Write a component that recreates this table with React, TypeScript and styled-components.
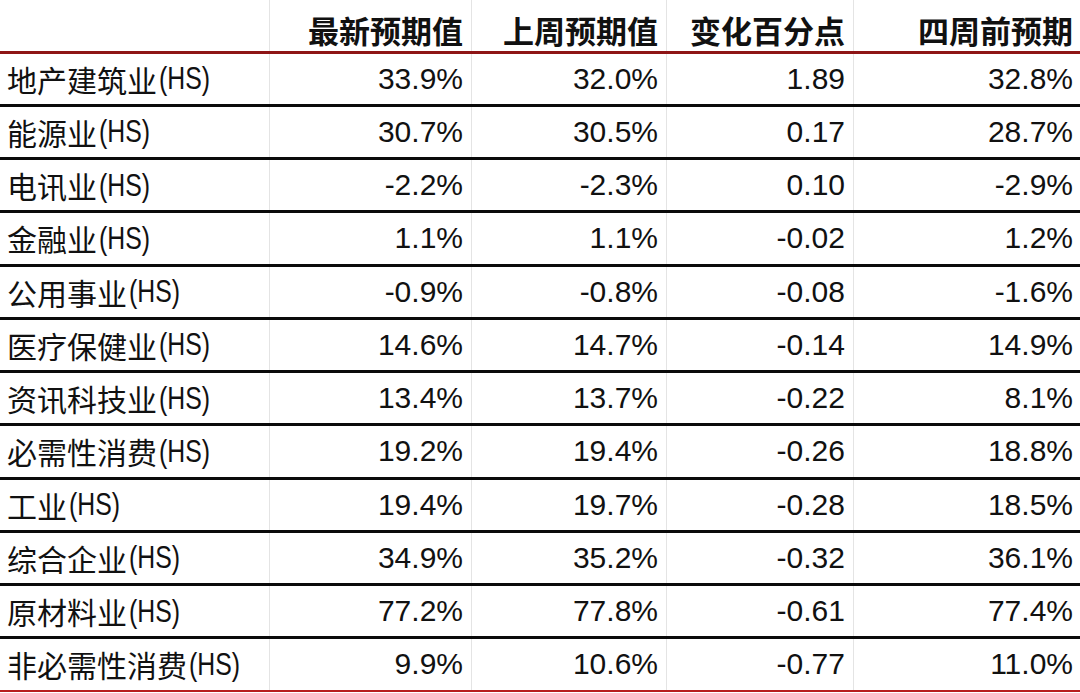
import styled, { createGlobalStyle } from 'styled-components'

const GlobalStyle = createGlobalStyle`
    html, body {
        margin: 0;
        padding: 0;
        background: #ffffff;
    }
    body {
        font-family: "Liberation Sans", Arial, "Noto Sans CJK SC", sans-serif;
        color: #111111;
    }
`;

const rows = [
    { name: '地产建筑业', latest: '33.9%', last: '32.0%', change: '1.89', prev: '32.8%' },
    { name: '能源业', latest: '30.7%', last: '30.5%', change: '0.17', prev: '28.7%' },
    { name: '电讯业', latest: '-2.2%', last: '-2.3%', change: '0.10', prev: '-2.9%' },
    { name: '金融业', latest: '1.1%', last: '1.1%', change: '-0.02', prev: '1.2%' },
    { name: '公用事业', latest: '-0.9%', last: '-0.8%', change: '-0.08', prev: '-1.6%' },
    { name: '医疗保健业', latest: '14.6%', last: '14.7%', change: '-0.14', prev: '14.9%' },
    { name: '资讯科技业', latest: '13.4%', last: '13.7%', change: '-0.22', prev: '8.1%' },
    { name: '必需性消费', latest: '19.2%', last: '19.4%', change: '-0.26', prev: '18.8%' },
    { name: '工业', latest: '19.4%', last: '19.7%', change: '-0.28', prev: '18.5%' },
    { name: '综合企业', latest: '34.9%', last: '35.2%', change: '-0.32', prev: '36.1%' },
    { name: '原材料业', latest: '77.2%', last: '77.8%', change: '-0.61', prev: '77.4%' },
    { name: '非必需性消费', latest: '9.9%', last: '10.6%', change: '-0.77', prev: '11.0%' },
];

const headers = ['最新预期值', '上周预期值', '变化百分点', '四周前预期'];

const Table = styled.div`
    width: 1080px;
    display: flex;
    flex-direction: column;
`;

const Row = styled.div<{ $head?: boolean; $last?: boolean }>`
    display: grid;
    grid-template-columns: 270px 202px 195px 187px 1fr;
    height: ${props => (props.$head ? '50.5px' : '50.25px')};
    border-bottom: ${props =>
        props.$head ? '3px solid #8e1516' : props.$last ? '2px solid #b81c1c' : '3px solid #0a0a0a'};
`;

const Cell = styled.div<{ $head?: boolean }>`
    display: flex;
    align-items: ${props => (props.$head ? 'flex-end' : 'center')};
    justify-content: flex-end;
    padding: ${props => (props.$head ? '0 8px 6px 0' : '0 8px 0 0')};
    border-right: 1px solid #e4e4e4;
    font-size: ${props => (props.$head ? '31px' : '30px')};
    font-weight: ${props => (props.$head ? 700 : 400)};
    font-family: ${props =>
        props.$head ? '"Noto Sans CJK SC", sans-serif' : '"Liberation Sans", Arial, sans-serif'};
    line-height: 1;
    white-space: nowrap;

    &:last-child {
        border-right: none;
        padding-right: 7px;
    }
`;

const Label = styled(Cell)`
    justify-content: flex-start;
    padding: 0 0 0 7px;
    font-family: "Noto Sans CJK SC", sans-serif;
    font-weight: 400;
    font-size: 30px;
`;

const Suffix = styled.span`
    display: inline-block;
    margin-left: 2px;
    font-family: "Liberation Sans", Arial, sans-serif;
    font-size: 31px;
    transform: scaleX(0.8);
    transform-origin: left center;
`;

export default function App() {
    return (
        <>
            <GlobalStyle />
            <Table>
                <Row $head>
                    <Cell $head />
                    {headers.map(h => (
                        <Cell $head key={h}>{h}</Cell>
                    ))}
                </Row>
                {rows.map((r, i) => (
                    <Row key={r.name} $last={i === rows.length - 1}>
                        <Label>
                            {r.name}
                            <Suffix>(HS)</Suffix>
                        </Label>
                        <Cell>{r.latest}</Cell>
                        <Cell>{r.last}</Cell>
                        <Cell>{r.change}</Cell>
                        <Cell>{r.prev}</Cell>
                    </Row>
                ))}
            </Table>
        </>
    )
}
